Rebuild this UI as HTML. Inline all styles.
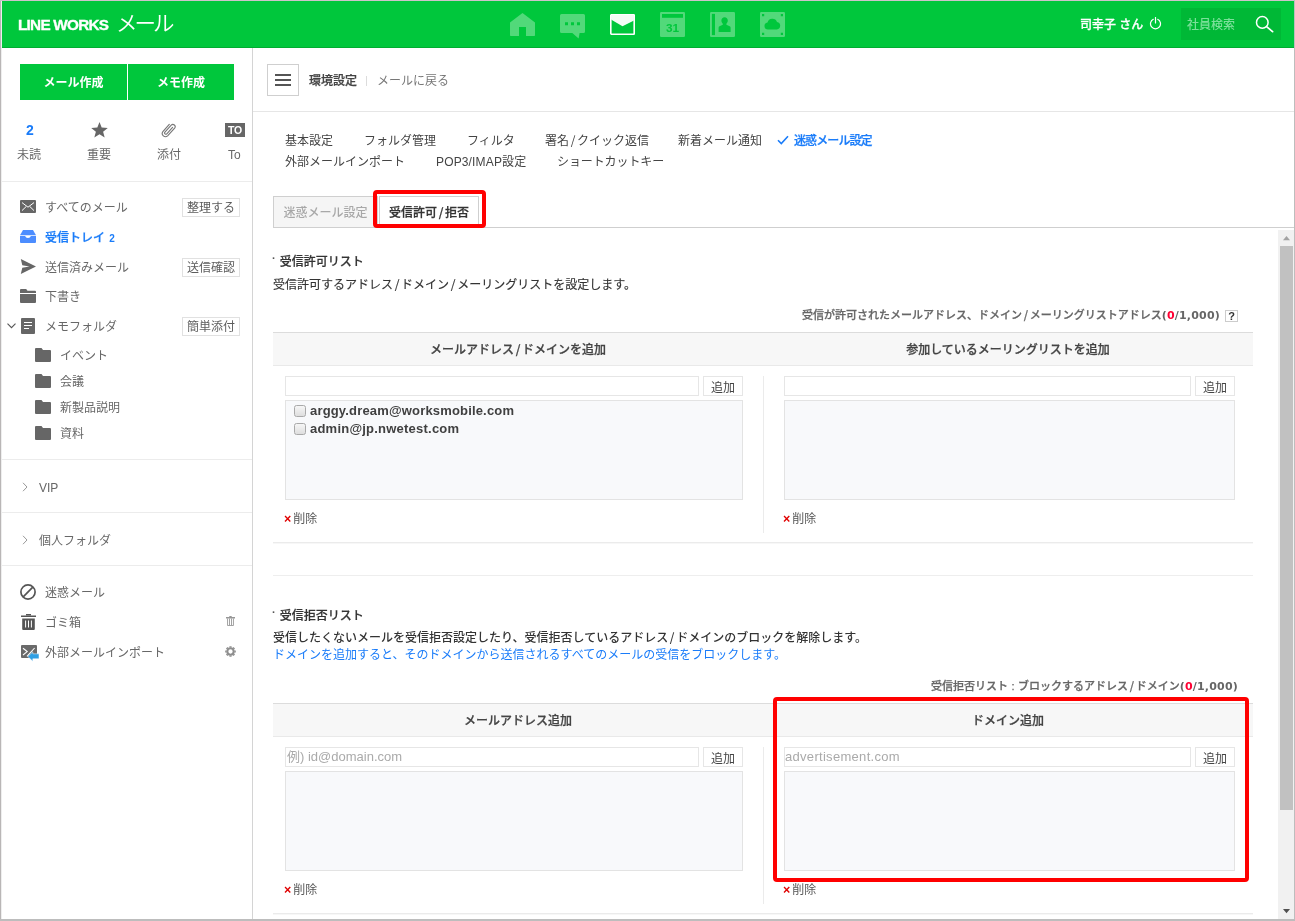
<!DOCTYPE html>
<html lang="ja">
<head>
<meta charset="utf-8">
<title>LINE WORKS メール</title>
<style>
*{box-sizing:border-box;margin:0;padding:0}
html,body{width:1295px;height:921px;overflow:hidden;background:#fff}
body{position:relative;font-family:"Liberation Sans","Noto Sans CJK JP",sans-serif;font-size:12px;color:#444;line-height:16px}
#w{position:absolute;left:0;top:0;width:1295px;height:921px;will-change:transform}
.abs{position:absolute}
.t{position:absolute;white-space:nowrap;line-height:16px;height:16px}
.b{font-weight:500;-webkit-text-stroke-width:.25px}
.bb{font-weight:bold}
.ttl{font-weight:500;-webkit-text-stroke:.2px #333}
/* frame */
#f-l{left:0;top:0;width:2px;height:921px;background:linear-gradient(90deg,#b9b6b6 0,#b9b6b6 1px,#eeeeee 1px)}
#f-t{left:0;top:0;width:1295px;height:1px;background:#cdc3ca}
#f-r{left:1294px;top:0;width:1px;height:921px;background:#bdbdbd}
#f-b{left:0;top:919px;width:1295px;height:2px;background:#bdbdbd}
/* header */
#hd{left:2px;top:1px;width:1292px;height:47px;background:#00c73c;border-bottom:1px solid #00ad31}
#logo{left:18px;top:17px;color:#fff;font-weight:bold;font-size:15.3px;letter-spacing:-0.75px;-webkit-text-stroke:.35px #fff}
#logo2{left:116px;top:10px;color:#fff;font-size:21.5px;font-weight:350;letter-spacing:-3px;line-height:24px;height:24px;font-family:"Noto Sans CJK JP",sans-serif}
#user{left:1080px;top:17px;color:#fff;font-weight:500;-webkit-text-stroke:.25px #fff}
#srch{left:1181px;top:8px;width:100px;height:32px;background:#00b836}
#srch .t{left:6px;top:9px;color:#7be09a;font-weight:500}
/* sidebar */
#sb{left:2px;top:48px;width:251px;height:871px;border-right:1px solid #d4d4d4;background:#fff}
.gbtn{position:absolute;top:64px;height:36px;background:#00c73c;color:#fff;font-weight:bold;text-align:center;line-height:39.500px}
.hl{position:absolute;height:1px;background:#ececec}
.sbt{color:#676767;transform:translateY(1.400px)}
.sbbtn{position:absolute;left:182px;width:58px;height:19px;border:1px solid #e1e1e1;background:#fff;color:#5c5c5c;text-align:center;line-height:19px;font-size:12px}
/* main */
.ln{position:absolute;height:1px}
.nav{color:#444}
.band{position:absolute;left:273px;width:980px;height:34px;background:#f7f7f7;border-top:1px solid #dcdcdc;border-bottom:1px solid #e9e9e9}
.bh{position:absolute;width:490px;text-align:center;font-weight:500;-webkit-text-stroke:.25px #444;color:#444;line-height:16px;height:16px;white-space:nowrap}
.inp{position:absolute;height:20px;border:1px solid #e6e6e6;background:#fff;font-size:13px;line-height:17px;color:#aaa;padding-left:1px;white-space:nowrap;overflow:hidden}
.add{position:absolute;width:40px;height:20px;border:1px solid #e6e6e6;background:#fff;color:#444;text-align:center;line-height:23px;font-size:12px;overflow:hidden}
.lst{position:absolute;height:100px;border:1px solid #e3e3e3;background:#f8f9fb}
.del{position:absolute;white-space:nowrap;color:#555;line-height:16px;height:16px;transform:translateY(.5px)}
.del i{font-style:normal;color:#e00000;font-weight:bold;font-size:12.5px;margin-right:2px;margin-left:-1px}
.cb{position:absolute;width:12px;height:12px;border:1px solid #a9a9a9;border-radius:2.5px;background:linear-gradient(#f6f6f6,#dedede)}
.em{position:absolute;white-space:nowrap;font-weight:bold;font-size:13px;color:#404040;line-height:18px;height:18px}
.cnt{position:absolute;white-space:nowrap;font-weight:500;-webkit-text-stroke:.25px #666;font-size:11px;color:#666;line-height:16px;height:16px;text-align:right}
.cnt b{color:#f03}
.num{font-family:"DejaVu Sans","Liberation Sans",sans-serif;letter-spacing:.2px;font-weight:bold;-webkit-text-stroke-width:0}
.sl{font-family:"Noto Sans CJK JP",sans-serif;margin:0 1.7px;line-height:0}
.red{position:absolute;border:4px solid #ff0000;border-radius:4px}

</style>
</head>
<body>
<div id="w">
<!-- header -->
<div class="abs" id="hd"></div>
<div class="t" id="logo">LINE WORKS</div>
<div class="t" id="logo2">メール</div>
<div class="t" id="user">司幸子 さん</div>
<div class="abs" id="srch"><div class="t">社員検索</div></div>


<!-- header icons -->
<svg class="abs" style="left:510px;top:13px" width="25" height="23" viewBox="0 0 25 23"><path fill="#fff" fill-opacity=".32" d="M12.500 0L25 9.400V22.300a.7.700 0 0 1-.7.700H16V14H9v9H.700a.7.700 0 0 1-.7-.7V9.400z"/></svg>
<svg class="abs" style="left:560px;top:14px" width="25" height="25" viewBox="0 0 25 25"><path fill="#fff" fill-opacity=".32" d="M1.500 0h22A1.500 1.500 0 0 1 25 1.500v16a1.500 1.500 0 0 1-1.500 1.500H19.600l-1 5.500L12.300 19H1.500A1.500 1.500 0 0 1 0 17.500v-16A1.500 1.500 0 0 1 1.500 0z"/><path fill="#00c73c" d="M5 8.200h3v3H5zM11 8.200h3v3h-3zM17 8.200h3v3h-3z"/></svg>
<svg class="abs" style="left:610px;top:14px" width="25" height="21" viewBox="0 0 25 21"><rect x=".75" y=".75" width="23.500" height="19.500" rx="1" fill="#00c73c" stroke="#fff" stroke-width="1.700"/><path fill="#f3fcf5" d="M1 1h23v5.600L12.500 12.200 1 5.600z"/></svg>
<svg class="abs" style="left:660px;top:12px" width="25" height="25" viewBox="0 0 25 25"><rect width="25" height="25" rx="1.200" fill="#fff" fill-opacity=".32"/><rect x="2" y="2" width="21" height="3.800" fill="#00c73c"/><text x="12.500" y="20.300" text-anchor="middle" font-family="Liberation Sans, sans-serif" font-weight="bold" font-size="11.800" fill="#00c73c">31</text></svg>
<svg class="abs" style="left:710px;top:12px" width="25" height="25" viewBox="0 0 25 25"><rect width="25" height="25" rx="1.200" fill="#fff" fill-opacity=".32"/><rect x="1.900" y="1.900" width="3.100" height="21.200" fill="#00c73c"/><path fill="#00c73c" d="M14.600 5.200c1.900 0 3.200 1.500 3.200 3.400 0 1.300-.6 2.500-1.400 3.200v.9l3.300 1.600c.6.300.9.800.9 1.500V19.900H8.600v-4.100c0-.7.300-1.200.9-1.500l3.300-1.600v-.9c-.8-.7-1.400-1.900-1.400-3.200 0-1.900 1.300-3.400 3.200-3.400z"/></svg>
<svg class="abs" style="left:760px;top:12px" width="25" height="25" viewBox="0 0 25 25"><rect width="25" height="25" rx="1.200" fill="#fff" fill-opacity=".32"/><path fill="#00c73c" d="M2 2h2.200v2.200H2zM20.800 2H23v2.200h-2.200zM2 20.800h2.200V23H2zM20.800 20.800H23V23h-2.200z"/><path fill="#00c73c" d="M8 17.600a3.600 3.600 0 0 1-.5-7.150A5 5 0 0 1 17 9.900a3.900 3.900 0 0 1-.2 7.700z"/></svg>
<svg class="abs" style="left:1149px;top:17px" width="13" height="13" viewBox="0 0 13 13"><path d="M4.300 2.300a5 5 0 1 0 4.400 0M6.500 0.500v5.500" fill="none" stroke="#fff" stroke-width="1.200" stroke-linecap="round"/></svg>
<svg class="abs" style="left:1255px;top:15px" width="19" height="18" viewBox="0 0 19 18"><circle cx="7.300" cy="7.400" r="5.800" fill="none" stroke="#fff" stroke-width="1.500"/><path d="M11.600 11.700l6 5" stroke="#fff" stroke-width="1.700" stroke-linecap="round"/></svg>

<!-- sidebar -->
<div class="abs" id="sb"></div>
<div class="gbtn" style="left:20px;width:107px">メール作成</div>
<div class="gbtn" style="left:128px;width:106px">メモ作成</div>


<!-- quick filter row -->
<div class="t bb" style="left:26px;top:121px;width:8px;font-size:14px;color:#1a7cf9;line-height:18px;height:18px">2</div>
<svg class="abs" style="left:90.500px;top:122.300px" width="17" height="15.500" viewBox="0 0 16 15"><path fill="#666" d="M8 0l2.1 5.3 5.9.4-4.5 3.7 1.5 5.6L8 11.9 3 15l1.5-5.6L0 5.7l5.9-.4z"/></svg>
<svg class="abs" style="left:161px;top:121.500px" width="15.500" height="16.500" viewBox="0 0 15 16"><path fill="none" stroke="#777" stroke-width="1.1" stroke-linecap="round" d="M11.2 5.2L5.6 11.4a1.2 1.2 0 0 1-1.8-1.6L9.9 3a2.2 2.2 0 0 1 3.3 2.9L6.4 13.4a3.1 3.1 0 0 1-4.6-4.1L8 2.4"/></svg>
<div class="abs" style="left:225px;top:123px;width:20px;height:14px;background:#666;color:#fff;font-weight:bold;font-size:10.5px;line-height:14px;text-align:center;letter-spacing:-.3px">TO</div>
<div class="t sbt" style="left:17px;top:146.400px">未読</div>
<div class="t sbt" style="left:87px;top:146.400px">重要</div>
<div class="t sbt" style="left:157px;top:146.400px">添付</div>
<div class="t sbt" style="left:228px;top:146.400px">To</div>
<div class="hl" style="left:2px;top:181px;width:250px"></div>

<!-- folder list -->
<svg class="abs" style="left:20px;top:200px" width="16" height="13" viewBox="0 0 16 13"><rect width="16" height="13" rx="1" fill="#666"/><path d="M2 2.6l6 4.6 6-4.6M2 10.6l4.3-4.2M14 10.6L9.7 6.4" fill="none" stroke="#fff" stroke-width="1"/></svg>
<div class="t sbt" style="left:45px;top:199px">すべてのメール</div>
<div class="sbbtn" style="top:198px">整理する</div>

<svg class="abs" style="left:20px;top:230px" width="16" height="13" viewBox="0 0 16 13"><path fill="#4c8dff" d="M3 0h10l3 5.2H0z"/><path fill="#4c8dff" d="M0 6h5.2c.3 1.3 1.4 2 2.8 2s2.500-.7 2.800-2H16v6a1 1 0 0 1-1 1H1a1 1 0 0 1-1-1z"/></svg>
<div class="t b" style="left:45px;top:230px;color:#1a7cf9">受信トレイ <span style="font-size:10px;margin-left:1px;font-weight:bold;-webkit-text-stroke-width:0">2</span></div>

<svg class="abs" style="left:20px;top:259px" width="16" height="15" viewBox="0 0 16 15"><path fill="#666" d="M0.800 0L16 7.500 0.800 15l1.500-6.300L9.500 7.500 2.300 6.300z"/></svg>
<div class="t sbt" style="left:45px;top:259px">送信済みメール</div>
<div class="sbbtn" style="top:258px">送信確認</div>

<svg class="abs" style="left:20px;top:289px" width="16" height="14" viewBox="0 0 16 14"><path fill="#666" d="M0 1a1 1 0 0 1 1-1h5.200l1.300 1.800H15a1 1 0 0 1 1 1V4H0z"/><path fill="#666" d="M0 5h16v8a1 1 0 0 1-1 1H1a1 1 0 0 1-1-1z"/></svg>
<div class="t sbt" style="left:45px;top:288px">下書き</div>

<svg class="abs" style="left:7px;top:323px" width="9" height="6" viewBox="0 0 9 6"><path d="M0.500 0.700l4 4 4-4" fill="none" stroke="#555" stroke-width="1.1"/></svg>
<svg class="abs" style="left:21px;top:318px" width="14" height="16" viewBox="0 0 14 16"><rect width="14" height="16" rx="1" fill="#666"/><path d="M3 4.500h8M3 7.500h8M3 10.500h5" stroke="#fff" stroke-width="1.200"/></svg>
<div class="t sbt" style="left:45px;top:318px">メモフォルダ</div>
<div class="sbbtn" style="top:317px">簡単添付</div>

<svg class="abs fo" style="left:35px;top:348px" width="16" height="14" viewBox="0 0 16 14"><path fill="#666" d="M0 1a1 1 0 0 1 1-1h5.500l1.500 2H15a1 1 0 0 1 1 1v10a1 1 0 0 1-1 1H1a1 1 0 0 1-1-1z"/></svg>
<div class="t sbt" style="left:60px;top:347px">イベント</div>
<svg class="abs fo" style="left:35px;top:374px" width="16" height="14" viewBox="0 0 16 14"><path fill="#666" d="M0 1a1 1 0 0 1 1-1h5.500l1.500 2H15a1 1 0 0 1 1 1v10a1 1 0 0 1-1 1H1a1 1 0 0 1-1-1z"/></svg>
<div class="t sbt" style="left:60px;top:373px">会議</div>
<svg class="abs fo" style="left:35px;top:400px" width="16" height="14" viewBox="0 0 16 14"><path fill="#666" d="M0 1a1 1 0 0 1 1-1h5.500l1.500 2H15a1 1 0 0 1 1 1v10a1 1 0 0 1-1 1H1a1 1 0 0 1-1-1z"/></svg>
<div class="t sbt" style="left:60px;top:399px">新製品説明</div>
<svg class="abs fo" style="left:35px;top:426px" width="16" height="14" viewBox="0 0 16 14"><path fill="#666" d="M0 1a1 1 0 0 1 1-1h5.500l1.500 2H15a1 1 0 0 1 1 1v10a1 1 0 0 1-1 1H1a1 1 0 0 1-1-1z"/></svg>
<div class="t sbt" style="left:60px;top:425px">資料</div>

<div class="hl" style="left:2px;top:459px;width:250px"></div>
<svg class="abs" style="left:22px;top:482px" width="6" height="10" viewBox="0 0 6 10"><path d="M1 0.800l4 4.200-4 4.200" fill="none" stroke="#999" stroke-width="1"/></svg>
<div class="t sbt" style="left:39px;top:479px">VIP</div>
<div class="hl" style="left:2px;top:512px;width:250px"></div>
<svg class="abs" style="left:22px;top:535px" width="6" height="10" viewBox="0 0 6 10"><path d="M1 0.800l4 4.200-4 4.200" fill="none" stroke="#999" stroke-width="1"/></svg>
<div class="t sbt" style="left:39px;top:532px">個人フォルダ</div>
<div class="hl" style="left:2px;top:565px;width:250px"></div>

<svg class="abs" style="left:20px;top:584px" width="16" height="16" viewBox="0 0 16 16"><circle cx="8" cy="8" r="7.100" fill="none" stroke="#555" stroke-width="1.700"/><path d="M3.200 12.800l9.600-9.600" stroke="#555" stroke-width="1.700"/></svg>
<div class="t sbt" style="left:45px;top:584px">迷惑メール</div>
<svg class="abs" style="left:21px;top:614px" width="15" height="16" viewBox="0 0 15 16"><path fill="#555" d="M5 0h5v1.300H5zM0 1.600h15v1.500H0zM1.200 4.400h12.600V15a1 1 0 0 1-1 1H2.200a1 1 0 0 1-1-1z"/><path d="M4.600 6.500v7M7.500 6.500v7M10.400 6.500v7" stroke="#fff" stroke-width="1"/></svg>
<div class="t sbt" style="left:45px;top:614px">ゴミ箱</div>
<svg class="abs" style="left:226px;top:616px" width="9" height="10" viewBox="0 0 9 10"><path fill="#979797" d="M3.300 0h2.400v1H3.300zM0 .9h9v1.600H0z"/><path fill="none" stroke="#979797" stroke-width=".9" d="M1.550 2.500v7.050h5.900V2.500M3.500 2.500v7M5.500 2.500v7"/></svg>
<svg class="abs" style="left:21px;top:645px" width="19" height="17" viewBox="0 0 19 17"><rect width="16" height="13" rx="1" fill="#6a6a6a"/><path d="M2 3.200l4.200 3.400L2 10M13.600 3L6 11.300" fill="none" stroke="#fff" stroke-width="1.100"/><path fill="#2f9fe3" stroke="#fff" stroke-width=".5" d="M6.800 11.500l5-4.700v2h6.200v5h-6.200v2.500z"/></svg>
<div class="t sbt" style="left:45px;top:644px">外部メールインポート</div>
<svg class="abs" style="left:224.600px;top:645.700px" width="11" height="11" viewBox="0 0 11 11"><g fill="none" stroke="#8e8e8e"><circle cx="5.500" cy="5.500" r="3.200" stroke-width="2.100"/><path stroke-width="2.200" d="M9.40 5.50L10.80 5.50M8.26 8.26L9.25 9.25M5.50 9.40L5.50 10.80M2.74 8.26L1.75 9.25M1.60 5.50L0.20 5.50M2.74 2.74L1.75 1.75M5.50 1.60L5.50 0.20M8.26 2.74L9.25 1.75"/></g></svg>


<!-- toolbar -->
<div class="abs" style="left:267px;top:64px;width:32px;height:32px;border:1px solid #cfcfcf;background:#fff"></div>
<div class="abs" style="left:275px;top:74px;width:16px;height:2px;background:#555"></div>
<div class="abs" style="left:275px;top:79px;width:16px;height:2px;background:#555"></div>
<div class="abs" style="left:275px;top:84px;width:16px;height:2px;background:#555"></div>
<div class="t b" style="left:309px;top:72.5px;color:#444">環境設定</div>
<div class="abs" style="left:366px;top:76px;width:1px;height:10px;background:#dcdcdc"></div>
<div class="t" style="left:377px;top:72.5px;color:#777">メールに戻る</div>
<div class="ln" style="left:253px;top:111px;width:1041px;background:#e6e6e6"></div>

<!-- settings nav -->
<div class="t nav" style="left:285px;top:133px">基本設定</div>
<div class="t nav" style="left:364px;top:133px">フォルダ管理</div>
<div class="t nav" style="left:467px;top:133px">フィルタ</div>
<div class="t nav" style="left:545px;top:133px">署名<span class="sl">/</span>クイック返信</div>
<div class="t nav" style="left:678px;top:133px">新着メール通知</div>
<svg class="abs" style="left:777px;top:135px" width="12" height="10" viewBox="0 0 12 10"><path d="M1 5.200l3.300 3.300L11 1.200" fill="none" stroke="#1a7cf9" stroke-width="1.600"/></svg>
<div class="t b" style="left:794px;top:133px;color:#1a7cf9;letter-spacing:-.9px">迷惑メール設定</div>
<div class="t nav" style="left:285px;top:153.5px">外部メールインポート</div>
<div class="t nav" style="left:436px;top:153.5px;letter-spacing:.15px">POP3/IMAP設定</div>
<div class="t nav" style="left:557px;top:153.5px;letter-spacing:-.1px">ショートカットキー</div>

<!-- tabs -->
<div class="ln" style="left:273px;top:227px;width:1021px;background:#cfcfcf"></div>
<div class="abs" style="left:273px;top:196px;width:105px;height:32px;border:1px solid #cfcfcf;background:#f5f5f5;color:#a8a8a8;font-weight:500;text-align:center;line-height:33px">迷惑メール設定</div>
<div class="abs b" style="left:379px;top:196px;width:100px;height:32px;border:1px solid #cfcfcf;border-bottom-color:#fff;background:#fff;color:#333;text-align:center;line-height:33px">受信許可<span class="sl">/</span>拒否</div>
<div class="red" style="left:373px;top:190px;width:113px;height:38px"></div>

<!-- scrollbar -->
<div class="abs" style="left:1278px;top:230px;width:16px;height:689px;background:#f1f1f1"></div>
<div class="abs" style="left:1280px;top:246px;width:13px;height:564px;background:#c1c1c1"></div>
<svg class="abs" style="left:1283px;top:236px" width="7" height="5" viewBox="0 0 7 5"><path fill="#a3a3a3" d="M3.500 0L7 4.200H0z"/></svg>
<svg class="abs" style="left:1283px;top:909px" width="7" height="5" viewBox="0 0 7 5"><path fill="#505050" d="M0 0h7L3.500 4.200z"/></svg>

<!-- section 1 -->
<div class="t ttl" style="left:272px;top:254px;color:#333"><span style="font-weight:bold;-webkit-text-stroke:0;margin-right:4px;font-size:11px;position:relative;top:-4px;color:#555">·</span>受信許可リスト</div>
<div class="t" style="left:273px;top:277px;color:#333;-webkit-text-stroke:.15px #333">受信許可するアドレス<span class="sl">/</span>ドメイン<span class="sl">/</span>メーリングリストを設定します。</div>
<div class="cnt" style="left:760px;width:460px;top:307px">受信が許可されたメールアドレス、ドメイン<span class="sl">/</span>メーリングリストアドレス<span class="num">(<b>0</b>/1,000)</span></div>
<div class="abs bb" style="left:1225px;top:310px;width:13px;height:12px;border:1px solid #ccc;background:#fff;font-size:11px;line-height:11px;text-align:center;color:#333">?</div>
<div class="band" style="top:332px"></div>
<div class="bh" style="left:273px;top:342px">メールアドレス<span class="sl">/</span>ドメインを追加</div>
<div class="bh" style="left:763px;top:342px">参加しているメーリングリストを追加</div>
<div class="inp" style="left:285px;top:376px;width:414px"></div>
<div class="add" style="left:703px;top:376px">追加</div>
<div class="lst" style="left:285px;top:400px;width:458px"></div>
<div class="cb" style="left:294px;top:404.500px"></div>
<div class="em" style="left:310px;top:402.300px;letter-spacing:.17px">arggy.dream@worksmobile.com</div>
<div class="cb" style="left:294px;top:422.500px"></div>
<div class="em" style="left:310px;top:420.300px;letter-spacing:.22px">admin@jp.nwetest.com</div>
<div class="del" style="left:285px;top:510px"><i>×</i>削除</div>
<div class="abs" style="left:763px;top:376px;width:1px;height:157px;background:#ebebeb"></div>
<div class="inp" style="left:784px;top:376px;width:407px"></div>
<div class="add" style="left:1195px;top:376px">追加</div>
<div class="lst" style="left:784px;top:400px;width:451px"></div>
<div class="del" style="left:784px;top:510px"><i>×</i>削除</div>
<div class="ln" style="left:273px;top:542px;width:980px;background:#e3e3e3;transform:translateY(.3px)"></div>
<div class="ln" style="left:273px;top:575px;width:980px;background:#eeeeee"></div>

<!-- section 2 -->
<div class="t ttl" style="left:272px;top:608px;color:#333"><span style="font-weight:bold;-webkit-text-stroke:0;margin-right:4px;font-size:11px;position:relative;top:-4px;color:#555">·</span>受信拒否リスト</div>
<div class="t" style="left:273px;top:630px;color:#333;font-weight:500">受信したくないメールを受信拒否設定したり、受信拒否しているアドレス<span class="sl">/</span>ドメインのブロックを解除します。</div>
<div class="t" style="left:273px;top:647px;color:#1a7cf9">ドメインを追加すると、そのドメインから送信されるすべてのメールの受信をブロックします。</div>
<div class="cnt" style="left:778px;width:460px;top:678px">受信拒否リスト<span style="margin:0 3.500px">:</span>ブロックするアドレス<span class="sl">/</span>ドメイン<span class="num">(<b>0</b>/1,000)</span></div>
<div class="band" style="top:703px"></div>
<div class="bh" style="left:273px;top:713px">メールアドレス追加</div>
<div class="bh" style="left:763px;top:713px">ドメイン追加</div>
<div class="inp" style="left:285px;top:747px;width:414px">例) id@domain.com</div>
<div class="add" style="left:703px;top:747px">追加</div>
<div class="lst" style="left:285px;top:771px;width:458px"></div>
<div class="del" style="left:285px;top:881px"><i>×</i>削除</div>
<div class="abs" style="left:763px;top:747px;width:1px;height:157px;background:#ebebeb"></div>
<div class="inp" style="left:784px;top:747px;width:407px;padding-left:0;letter-spacing:.3px">advertisement.com</div>
<div class="add" style="left:1195px;top:747px">追加</div>
<div class="lst" style="left:784px;top:771px;width:451px"></div>
<div class="del" style="left:784px;top:881px"><i>×</i>削除</div>
<div class="ln" style="left:273px;top:913px;width:980px;background:#e3e3e3;transform:translateY(.3px)"></div>
<div class="red" style="left:773px;top:697px;width:476px;height:185px"></div>


<!-- frame -->
<div class="abs" id="f-l"></div><div class="abs" id="f-t"></div><div class="abs" id="f-r"></div><div class="abs" id="f-b"></div>
</div>
</body>
</html>
